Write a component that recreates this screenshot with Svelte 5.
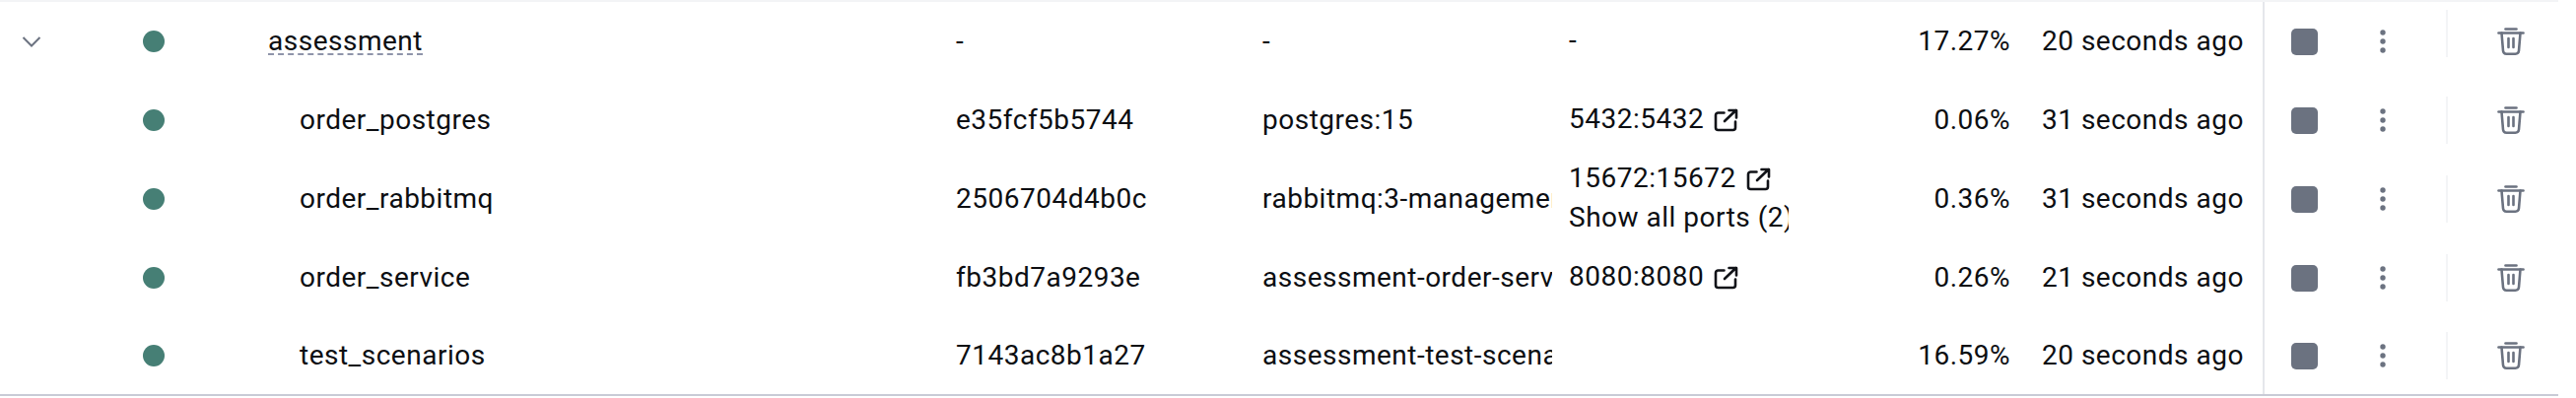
<script>
  const rows = [
    { name: 'assessment', group: true, id: '-', image: '-', ports: [], dash: true, cpu: '17.27%', last: '20 seconds ago' },
    { name: 'order_postgres', id: 'e35fcf5b5744', image: 'postgres:15', ports: ['5432:5432'], cpu: '0.06%', last: '31 seconds ago' },
    { name: 'order_rabbitmq', id: '2506704d4b0c', image: 'rabbitmq:3-management', ports: ['15672:15672'], more: 'Show all ports (2)', cpu: '0.36%', last: '31 seconds ago' },
    { name: 'order_service', id: 'fb3bd7a9293e', image: 'assessment-order-service', ports: ['8080:8080'], cpu: '0.26%', last: '21 seconds ago' },
    { name: 'test_scenarios', id: '7143ac8b1a27', image: 'assessment-test-scenarios', ports: [], cpu: '16.59%', last: '20 seconds ago' }
  ];
</script>

<div class="table">
  {#each rows as r, i}
    <div class="row" class:first={i === 0} class:last={i === rows.length - 1}>
      <div class="cell toggle">
        {#if r.group}
          <svg width="20" height="20" viewBox="0 0 20 20" fill="none" stroke="#6b7280" stroke-width="2"><path d="M1.500 6 10 14.500 18.500 6" /></svg>
        {/if}
      </div>
      <div class="cell status"><span class="dot"></span></div>
      <div class="cell text name">
        {#if r.group}<span class="grp">{r.name}</span>{:else}<span class="child">{r.name}</span>{/if}
      </div>
      <div class="cell text id">{r.id}</div>
      <div class="cell text image">{r.image}</div>
      <div class="cell text ports">
        {#if r.dash}-{/if}
        {#each r.ports as p}
          <div class="port">{p}
            <svg class="ext" width="25" height="25" viewBox="0 0 25 25" fill="none" stroke="#111318" stroke-width="2.600" stroke-linecap="round" stroke-linejoin="round">
              <path d="M10.500 5.500H4.500A2.500 2.500 0 0 0 2 8v12.500A2.500 2.500 0 0 0 4.500 23h15a2.500 2.500 0 0 0 2.500-2.500v-6" />
              <path d="M11 14 22.500 3M15.500 3h7.500v7.500" />
            </svg>
          </div>
        {/each}
        {#if r.more}<div class="more">{r.more}</div>{/if}
      </div>
      <div class="cell text cpu">{r.cpu}</div>
      <div class="cell text started">{r.last}</div>
      <div class="cell actions">
        <span class="stop"></span>
        <svg class="kebab" width="8" height="26" viewBox="0 0 8 26" fill="#6b7280"><circle cx="4" cy="4" r="2.700" /><circle cx="4" cy="13" r="2.700" /><circle cx="4" cy="22" r="2.700" /></svg>
        <span class="sep"></span>
        <svg class="trash" width="32" height="32" viewBox="0 0 32 32" fill="none" stroke="#6b7280" stroke-width="2.600" stroke-linecap="round" stroke-linejoin="round">
          <path d="M3.500 7.500h25" />
          <path d="M10.500 3.500h11" />
          <path d="M6.500 7.500 8 25.500a3.500 3.500 0 0 0 3.500 3.200h9A3.500 3.500 0 0 0 24 25.500l1.500-18" />
          <path d="M13.500 13v9M18.500 13v9" />
        </svg>
      </div>
    </div>
  {/each}
</div>

<style>
  :global(body) {
    margin: 0;
    background: #fff;
  }

  .table {
    width: 2596px;
    height: 402px;
    box-sizing: border-box;
    border-top: 2px solid #f3f4f6;
    border-bottom: 2px solid #c9cbd6;
    font-family: Roboto, "Liberation Sans", sans-serif;
    font-size: 28px;
    letter-spacing: 0.5px;
    color: #0c0e12;
  }

  .row {
    display: grid;
    grid-template-columns: 110px 146px 698px 311px 310px 240px 241px 240px 300px;
    height: 80px;
  }

  .row.last {
    height: 78px;
  }

  .cell {
    display: flex;
    align-items: center;
    min-width: 0;
    overflow: hidden;
    white-space: nowrap;
    padding-left: 16px;
    box-sizing: border-box;
  }

  .text {
    padding-bottom: 2px;
  }

  .toggle {
    padding-left: 22px;
  }

  .status {
    padding-left: 35px;
  }

  .dot {
    width: 22px;
    height: 22px;
    border-radius: 50%;
    background: #467f75;
  }

  .grp {
    line-height: 24px;
    margin-top: 4px;
    border-bottom: 2px dashed #8f95aa;
  }

  .child {
    padding-left: 32px;
  }

  .ports {
    display: block;
    align-self: center;
    line-height: 40px;
    padding-left: 17px;
  }

  .port {
    display: flex;
    align-items: center;
    gap: 10px;
  }

  .ext {
    flex: none;
  }

  .cpu {
    justify-content: flex-end;
    padding-left: 0;
    padding-right: 16px;
  }

  .actions {
    position: relative;
    padding-left: 27px;
    border-left: 2px solid #e5e7eb;
    overflow: visible;
  }

  .stop {
    flex: none;
    width: 27px;
    height: 27px;
    border-radius: 5px;
    background: #6b7280;
  }

  .kebab {
    flex: none;
    margin-left: 62px;
  }

  .sep {
    flex: none;
    width: 2px;
    height: 48px;
    margin-left: 60px;
    background: #f3f4f6;
  }

  .first .sep {
    position: relative;
    top: -8px;
  }

  .trash {
    flex: none;
    margin-left: 48px;
  }
</style>
